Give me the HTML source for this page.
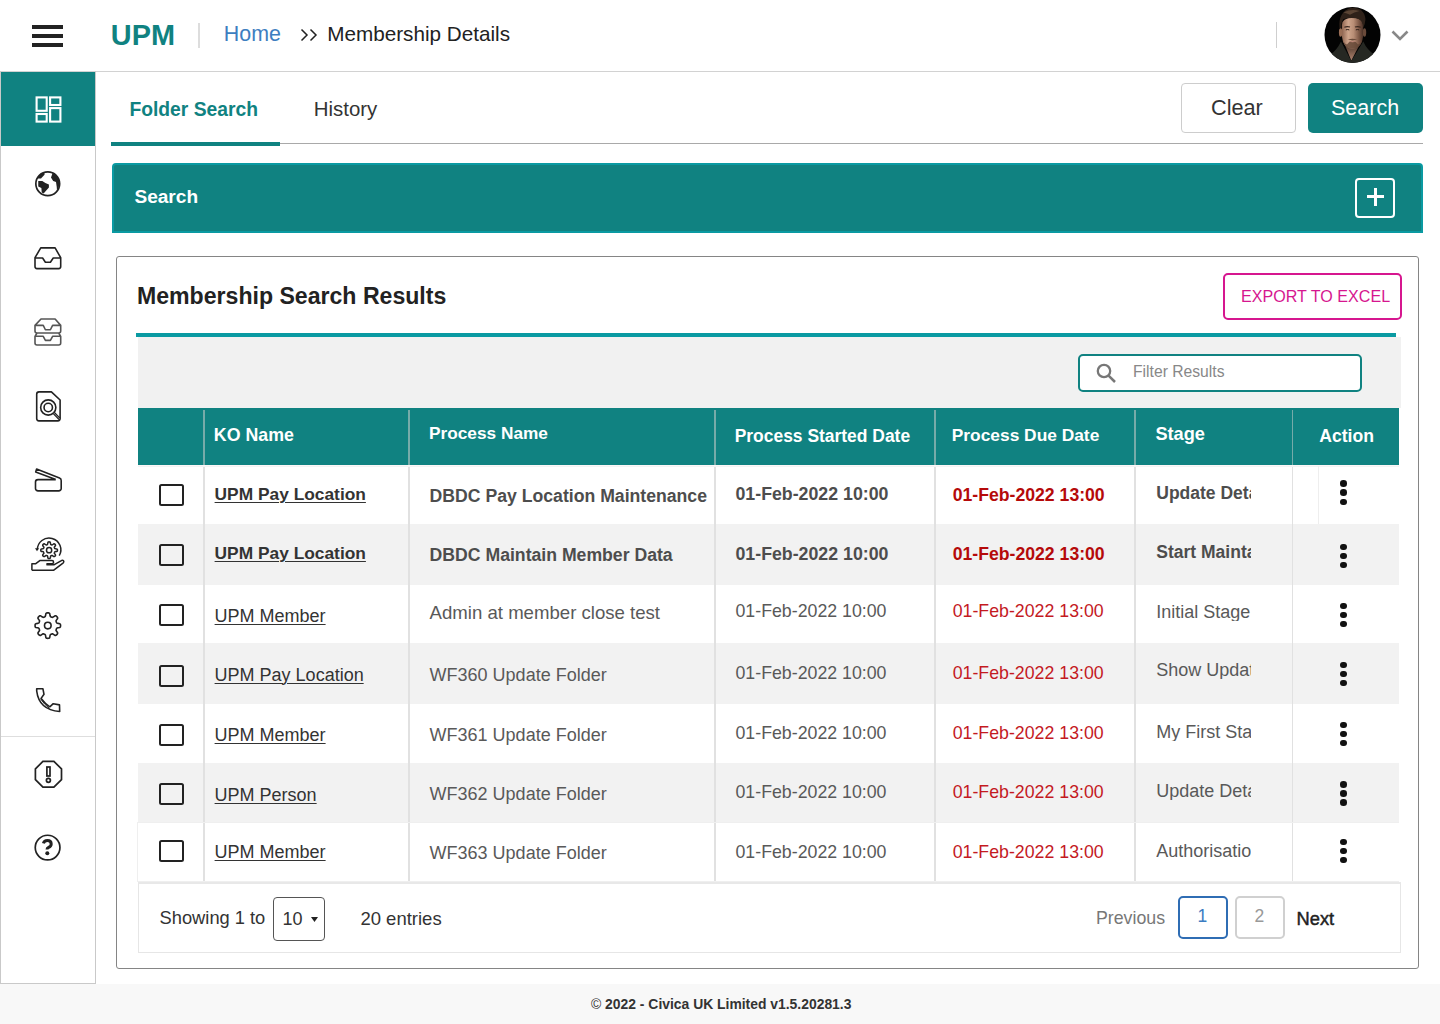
<!DOCTYPE html>
<html><head><meta charset="utf-8"><title>UPM - Membership Details</title>
<style>
*{margin:0;padding:0;box-sizing:border-box}
html,body{width:1440px;height:1024px;overflow:hidden;background:#fff;font-family:"Liberation Sans",sans-serif}
body{position:relative}
.a{position:absolute;white-space:nowrap;line-height:1}
.b{position:absolute}
svg{position:absolute;overflow:visible}
.u{text-decoration:underline;text-decoration-thickness:1px;text-underline-offset:2px}
.clip{overflow:hidden}
</style></head><body>
<div class="b" style="left:0;top:71px;width:1440px;height:1px;background:#d2d2d2"></div>
<div class="b" style="left:32px;top:25.2px;width:31px;height:3.6px;background:#222"></div>
<div class="b" style="left:32px;top:34.2px;width:31px;height:3.6px;background:#222"></div>
<div class="b" style="left:32px;top:43.2px;width:31px;height:3.6px;background:#222"></div>
<div class="a" style="left:110.8px;top:21.43px;font-size:28.9px;color:#108281;font-weight:700;">UPM</div>
<div class="b" style="left:198px;top:22.5px;width:1.5px;height:25.5px;background:#ddd"></div>
<div class="a" style="left:223.8px;top:23.68px;font-size:21.4px;color:#3d7ec0;">Home</div>
<svg style="left:300px;top:28px" width="18" height="14" viewBox="0 0 18 14"><path d="M1.5 1.5 L7 7 L1.5 12.5 M10.5 1.5 L16 7 L10.5 12.5" fill="none" stroke="#222" stroke-width="1.5"/></svg>
<div class="a" style="left:327.2px;top:23.87px;font-size:20.7px;color:#222;">Membership Details</div>
<div class="b" style="left:1276px;top:22px;width:1.2px;height:26px;background:#cfcfcf"></div>
<svg style="left:1320px;top:3px" width="66" height="64" viewBox="0 0 66 64">
<defs><clipPath id="av"><circle cx="32.5" cy="32" r="28"/></clipPath>
<linearGradient id="sk" x1="0" x2="1" y1="0" y2="0"><stop offset="0" stop-color="#8e6450"/><stop offset="0.3" stop-color="#cfa58c"/><stop offset="0.55" stop-color="#b88d75"/><stop offset="0.8" stop-color="#7e5846"/><stop offset="1" stop-color="#4a3228"/></linearGradient>
<linearGradient id="nk" x1="0" x2="0" y1="0" y2="1"><stop offset="0" stop-color="#4a3428"/><stop offset="1" stop-color="#b08470"/></linearGradient></defs>
<g clip-path="url(#av)">
<rect width="66" height="64" fill="#030303"/>
<path d="M2 64 L10 52 Q17 47 21 38.5 L31.3 58 L43.3 38.5 Q47 47 55 52 L64 64 Z" fill="#262823"/>
<path d="M24.5 41 L40 41 L31.3 57.5 Z" fill="url(#nk)"/>
<ellipse cx="20.6" cy="29.5" rx="1.7" ry="4.2" fill="#9a6e56"/>
<ellipse cx="44.5" cy="29.5" rx="1.7" ry="4.2" fill="#6a4a3a"/>
<path d="M21.9 22 Q22 15 32.5 14.5 Q43 15 43.1 22 L43 34 Q42 45 32.5 45.8 Q23 45 22 34 Z" fill="url(#sk)"/>
<path d="M22.3 33 Q23.5 45.5 32.5 45.8 Q41.5 45.5 42.7 33 Q41.8 41 38 41.5 Q35 37.8 32.5 37.6 Q30 37.8 27 41.5 Q23.2 41 22.3 33Z" fill="#5e4232" opacity="0.8"/>
<path d="M27.8 36.6 Q32.5 34.8 37.2 36.6 Q32.5 37.6 27.8 36.6Z" fill="#6a4a3a"/>
<path d="M28.5 38.4 Q32.5 37.4 36.5 38.4 Q32.5 40 28.5 38.4Z" fill="#c08a7a"/>
<path d="M24.3 24.2 Q27.3 23 30 24.1 M35 24.1 Q37.7 23 40.7 24.2" stroke="#3a2820" stroke-width="1.1" fill="none"/>
<path d="M25.8 26.9 Q27.5 26.1 29.3 26.9 M35.8 26.9 Q37.5 26.1 39.2 26.9" stroke="#2a1c16" stroke-width="1" fill="none"/>
<path d="M19.5 25 Q18 9 31 4.8 Q44 4 45.5 16 Q45 22 43.2 25 Q43 16 36 15.2 Q29 14.6 23.5 16 Q21 19 21.3 25Z" fill="#2e2119"/>
<path d="M23.5 9.5 Q31 5.5 39.5 8 Q34 9.2 30 11.8 Q27 10.2 23.5 9.5Z" fill="#5a4434"/>
</g></svg>
<svg style="left:1390px;top:29px" width="20" height="13" viewBox="0 0 20 13"><path d="M2.5 2.5 L10 10 L17.5 2.5" fill="none" stroke="#888" stroke-width="2.6"/></svg>
<div class="b" style="left:0;top:71px;width:96px;height:913px;border-left:1px solid #c9c9c9;border-right:1px solid #c9c9c9;border-bottom:1px solid #c9c9c9"></div>
<div class="b" style="left:1px;top:72px;width:94px;height:74px;background:#108281"></div>
<div class="b" style="left:1px;top:736px;width:94px;height:1px;background:#dedede"></div>
<svg style="left:0;top:0" width="96" height="140" viewBox="0 0 96 140">
<g fill="none" stroke="#fff" stroke-width="2.1">
<rect x="36.6" y="97.4" width="10.1" height="13.4"/>
<rect x="36.6" y="114" width="10.1" height="7.6"/>
<rect x="50.1" y="97.4" width="10.3" height="7.6"/>
<rect x="50.1" y="108.1" width="10.3" height="13.5"/>
</g></svg>
<svg style="left:32px;top:168px" width="32" height="32" viewBox="0 0 32 32">
<circle cx="15.75" cy="15.7" r="11.9" fill="none" stroke="#222" stroke-width="1.7"/>
<path d="M5.3 10.4 L9 10.4 L12.5 6.8 L12.5 4.2 Q7.5 5.6 5.3 10.4Z" fill="#222"/>
<path d="M20.8 4.6 L19 9.4 L21.2 13.1 L24 14 L24.7 18.8 L25 22.6 Q28 18 27.4 13 Q25.5 6.8 20.8 4.6Z" fill="#222"/>
<path d="M6.25 13.1 L10.3 13.1 L13.4 15 L16.9 16.6 L16.9 19.4 L11.6 25.6 L9.7 24.4 L9.4 20 L6.25 18.4Z" fill="#222"/>
</svg>
<svg style="left:32px;top:242px" width="32" height="32" viewBox="0 0 32 32">
<path d="M8.75 5.9 H23.1 L28.7 15.7 V24.6 a2 2 0 0 1 -2 2 H5 a2 2 0 0 1 -2 -2 V15.7 Z M3 16 H10.6 L13.4 20.3 H18.4 L21.25 16 H28.7" fill="none" stroke="#222" stroke-width="1.6" stroke-linejoin="round"/>
</svg>
<svg style="left:32px;top:316px" width="32" height="32" viewBox="0 0 32 32">
<g fill="none" stroke="#555" stroke-width="1.6" stroke-linejoin="round">
<path d="M9 3 H23.1 L28.7 9.4 V15 a2 2 0 0 1 -2 2 H5 a2 2 0 0 1 -2 -2 V9.4 Z M3 9.4 H11.25 L13.4 13.75 H18.4 L20.6 9.4 H28.7"/>
<path d="M5 17 L3 20.3 V27 a2 2 0 0 0 2 2 H26.7 a2 2 0 0 0 2 -2 V20.3 L26.7 17 M3 20.3 H11.25 L13.4 24.4 H18.4 L20.6 20.3 H28.7"/>
</g></svg>
<svg style="left:32px;top:390px" width="32" height="33" viewBox="0 0 32 33">
<g fill="none" stroke="#222" stroke-width="1.6" stroke-linejoin="round">
<path d="M19.4 1.9 H7 a2.3 2.3 0 0 0 -2.3 2.3 V28.6 a2.3 2.3 0 0 0 2.3 2.3 H25.8 a2.3 2.3 0 0 0 2.3 -2.3 V10 Z"/>
<circle cx="16.25" cy="17.5" r="7.6"/>
<circle cx="16.25" cy="17.5" r="4.2"/>
</g>
<path d="M21.6 22.8 L27.6 28.9" stroke="#222" stroke-width="2.8"/>
<path d="M21.6 22.8 L27.6 28.9" stroke="#bbb" stroke-width="0.7"/>
</svg>
<svg style="left:32px;top:464px" width="32" height="32" viewBox="0 0 32 32">
<path d="M23.75 15.6 H6 a2.5 2.5 0 0 0 -2.5 2.5 V24.4 a2.5 2.5 0 0 0 2.5 2.5 H26.7 a2.5 2.5 0 0 0 2.5 -2.5 V16.6 a2.6 2.6 0 0 0 -1.7 -2.6 L4.6 5.1 L3.7 8.0 L23.75 15.6" fill="none" stroke="#222" stroke-width="1.6" stroke-linejoin="round"/>
</svg>
<svg style="left:28px;top:534px" width="40" height="40" viewBox="0 0 40 40">
<g fill="none" stroke="#222" stroke-width="1.5" stroke-linejoin="round">
<path d="M21.1 7.8 L21.5 7.9 L22.0 8.0 L22.3 8.4 L22.5 9.6 L22.7 10.4 L22.9 10.6 L23.2 10.7 L23.5 10.9 L23.8 11.0 L24.1 11.0 L24.8 10.5 L25.8 9.8 L26.3 9.8 L26.7 10.0 L27.0 10.3 L27.3 10.6 L27.5 11.0 L27.5 11.5 L26.8 12.5 L26.3 13.2 L26.3 13.5 L26.4 13.8 L26.6 14.1 L26.7 14.4 L26.9 14.6 L27.7 14.8 L28.9 15.0 L29.3 15.3 L29.4 15.8 L29.5 16.2 L29.4 16.6 L29.3 17.1 L28.9 17.4 L27.7 17.6 L26.9 17.8 L26.7 18.0 L26.6 18.3 L26.4 18.6 L26.3 18.9 L26.3 19.2 L26.8 19.9 L27.5 20.9 L27.5 21.4 L27.3 21.8 L27.0 22.1 L26.7 22.4 L26.3 22.6 L25.8 22.6 L24.8 21.9 L24.1 21.4 L23.8 21.4 L23.5 21.5 L23.2 21.7 L22.9 21.8 L22.7 22.0 L22.5 22.8 L22.3 24.0 L22.0 24.4 L21.5 24.5 L21.1 24.5 L20.7 24.5 L20.2 24.4 L19.9 24.0 L19.7 22.8 L19.5 22.0 L19.3 21.8 L19.0 21.7 L18.7 21.5 L18.4 21.4 L18.1 21.4 L17.4 21.9 L16.4 22.6 L15.9 22.6 L15.5 22.4 L15.2 22.1 L14.9 21.8 L14.7 21.4 L14.7 20.9 L15.4 19.9 L15.9 19.2 L15.9 18.9 L15.8 18.6 L15.6 18.3 L15.5 18.0 L15.3 17.8 L14.5 17.6 L13.3 17.4 L12.9 17.1 L12.8 16.6 L12.8 16.2 L12.8 15.8 L12.9 15.3 L13.3 15.0 L14.5 14.8 L15.3 14.6 L15.5 14.4 L15.6 14.1 L15.8 13.8 L15.9 13.5 L15.9 13.2 L15.4 12.5 L14.7 11.5 L14.7 11.0 L14.9 10.6 L15.2 10.3 L15.5 10.0 L15.9 9.8 L16.4 9.8 L17.4 10.5 L18.1 11.0 L18.4 11.0 L18.7 10.9 L19.0 10.7 L19.3 10.6 L19.5 10.4 L19.7 9.6 L19.9 8.4 L20.2 8.0 L20.7 7.9Z"/>
<circle cx="21.1" cy="16.2" r="2.6"/>
<path d="M9.35 15.9 A11.75 11.75 0 1 1 31.25 21.7"/>
<path d="M3.9 36.2 V29.7 H7.8 L11.8 26.6 H24 a1.55 1.55 0 0 1 0 3.1 H18.4"/>
<path d="M18.4 30.7 H26.3 L33.4 26.6 a1.45 1.45 0 0 1 1.9 2.2 L25.8 36.2 H3.9"/>
</g>
<path d="M7 14.2 L11 14.2 L9 17.2Z" fill="#222"/>
</svg>
<svg style="left:32px;top:610px" width="32" height="32" viewBox="0 0 32 32">
<g fill="none" stroke="#222" stroke-width="1.6" stroke-linejoin="round">
<path d="M15.8 2.8 L16.5 2.9 L17.1 3.0 L17.7 3.6 L18.0 5.3 L18.3 6.4 L18.7 6.8 L19.1 7.0 L19.6 7.1 L20.0 7.3 L20.5 7.4 L21.5 6.8 L22.9 5.8 L23.8 5.8 L24.3 6.1 L24.8 6.6 L25.3 7.1 L25.6 7.6 L25.6 8.5 L24.6 9.9 L24.0 10.9 L24.1 11.4 L24.3 11.8 L24.4 12.3 L24.6 12.7 L25.0 13.1 L26.1 13.4 L27.8 13.7 L28.4 14.3 L28.5 14.9 L28.6 15.6 L28.5 16.3 L28.4 16.9 L27.8 17.5 L26.1 17.8 L25.0 18.1 L24.6 18.5 L24.4 18.9 L24.3 19.4 L24.1 19.8 L24.0 20.3 L24.6 21.3 L25.6 22.7 L25.6 23.6 L25.3 24.1 L24.8 24.6 L24.3 25.1 L23.8 25.4 L22.9 25.4 L21.5 24.4 L20.5 23.8 L20.0 23.9 L19.6 24.1 L19.1 24.2 L18.7 24.4 L18.3 24.8 L18.0 25.9 L17.7 27.6 L17.1 28.2 L16.5 28.3 L15.8 28.4 L15.1 28.3 L14.5 28.2 L13.9 27.6 L13.6 25.9 L13.3 24.8 L12.9 24.4 L12.5 24.2 L12.0 24.1 L11.6 23.9 L11.1 23.8 L10.1 24.4 L8.7 25.4 L7.8 25.4 L7.3 25.1 L6.8 24.6 L6.3 24.1 L6.0 23.6 L6.0 22.7 L7.0 21.3 L7.6 20.3 L7.5 19.8 L7.3 19.4 L7.2 18.9 L7.0 18.5 L6.6 18.1 L5.5 17.8 L3.8 17.5 L3.2 16.9 L3.1 16.3 L3.1 15.6 L3.1 14.9 L3.2 14.3 L3.8 13.7 L5.5 13.4 L6.6 13.1 L7.0 12.7 L7.2 12.3 L7.3 11.8 L7.5 11.4 L7.6 10.9 L7.0 9.9 L6.0 8.5 L6.0 7.6 L6.3 7.1 L6.8 6.6 L7.3 6.1 L7.8 5.8 L8.7 5.8 L10.1 6.8 L11.1 7.4 L11.6 7.3 L12.0 7.1 L12.5 7.0 L12.9 6.8 L13.3 6.4 L13.6 5.3 L13.9 3.6 L14.5 3.0 L15.1 2.9Z"/>
<circle cx="15.8" cy="15.6" r="3.3"/>
</g></svg>
<svg style="left:32px;top:684px" width="32" height="32" viewBox="0 0 32 32">
<g fill="none" stroke="#222" stroke-width="1.6" stroke-linejoin="round">
<path d="M4.7 4.7 H10.9 L12 10.3 L9.1 14.4 Q13 19.5 17.8 22.8 L21.25 19.7 L27.5 20.9 L27.7 27.5 Q7 26 4.7 7 Z"/>
<path d="M8.6 14.8 Q12.3 20.6 17.4 24.4" stroke-width="1"/>
</g></svg>
<svg style="left:32px;top:758px" width="32" height="32" viewBox="0 0 32 32">
<g fill="none" stroke="#222" stroke-width="1.7" stroke-linejoin="miter">
<path d="M10.9 3.4 H21.9 L29.5 10.9 V21.6 L21.9 29.2 H10.9 L3.4 21.6 V10.9 Z"/>
<rect x="14.9" y="9" width="3.1" height="9"/>
<circle cx="16.4" cy="22.3" r="2"/>
</g></svg>
<svg style="left:32px;top:832px" width="32" height="32" viewBox="0 0 32 32">
<circle cx="15.6" cy="15.6" r="12.35" fill="none" stroke="#222" stroke-width="1.7"/>
<path d="M11.4 11.4 Q12.2 8.6 15.4 8.6 Q19.2 8.6 19.2 11.9 Q19.2 14.2 16.6 15.4 Q15 16.1 15 17.4" fill="none" stroke="#222" stroke-width="3"/>
<circle cx="15.3" cy="21.3" r="2" fill="#222"/>
</svg>
<div class="a" style="left:129.4px;top:99.76px;font-size:19.3px;color:#108281;font-weight:700;">Folder Search</div>
<div class="a" style="left:313.8px;top:99.13px;font-size:20.4px;color:#333;">History</div>
<div class="b" style="left:279px;top:143px;width:1144px;height:1px;background:#a9a9a9"></div>
<div class="b" style="left:111px;top:142px;width:169px;height:4px;background:#108281"></div>
<div class="b" style="left:1181px;top:83px;width:115px;height:50px;border:1px solid #cdcdcd;border-radius:4px;background:#fff"></div>
<div class="a" style="left:1211.0px;top:97.03px;font-size:21.7px;color:#333;">Clear</div>
<div class="b" style="left:1308px;top:83px;width:115px;height:50px;border-radius:5px;background:#108281"></div>
<div class="a" style="left:1331.0px;top:97.70px;font-size:21.5px;color:#fff;">Search</div>
<div class="b" style="left:112px;top:163px;width:1311px;height:70px;background:#108281;border:2px solid #0a9aa2;border-radius:4px 4px 0 0"></div>
<div class="a" style="left:134.4px;top:186.73px;font-size:19.1px;color:#fff;font-weight:700;">Search</div>
<div class="b" style="left:1355px;top:178px;width:40px;height:40px;border:2px solid #fff;border-radius:4px"></div>
<div class="b" style="left:1366.6px;top:195.2px;width:17.1px;height:3.2px;background:#fff"></div>
<div class="b" style="left:1373.5px;top:188px;width:3.4px;height:18px;background:#fff"></div>
<div class="b" style="left:116px;top:256px;width:1303px;height:713px;border:1px solid #858585;border-radius:3px"></div>
<div class="a" style="left:137.0px;top:284.84px;font-size:23.1px;color:#222;font-weight:700;">Membership Search Results</div>
<div class="b" style="left:1223px;top:273px;width:179px;height:47px;border:2px solid #d6168f;border-radius:5px"></div>
<div class="a" style="left:1241.0px;top:287.67px;font-size:16.1px;color:#d6168f;">EXPORT TO EXCEL</div>
<div class="b" style="left:136px;top:333px;width:1260px;height:4px;background:#0a9aa2"></div>
<div class="b" style="left:138px;top:337px;width:1263px;height:71px;background:#f1f1f1"></div>
<div class="b" style="left:1078px;top:354px;width:284px;height:38px;border:2px solid #108281;border-radius:5px;background:#fff"></div>
<svg style="left:1094px;top:361px" width="24" height="24" viewBox="0 0 24 24"><circle cx="10" cy="10" r="6.2" fill="none" stroke="#777" stroke-width="2.3"/><path d="M14.6 14.6 L21 21" stroke="#777" stroke-width="2.5"/></svg>
<div class="a" style="left:1133.0px;top:363.91px;font-size:15.7px;color:#888;">Filter Results</div>
<div class="b" style="left:138px;top:408px;width:1261px;height:57px;background:#108281"></div>
<div class="a" style="left:213.8px;top:426.53px;font-size:17.8px;color:#fff;font-weight:700;">KO Name</div>
<div class="a" style="left:429.0px;top:424.79px;font-size:17.25px;color:#fff;font-weight:700;">Process Name</div>
<div class="a" style="left:734.7px;top:427.53px;font-size:17.45px;color:#fff;font-weight:700;">Process Started Date</div>
<div class="a" style="left:951.8px;top:427.31px;font-size:17.35px;color:#fff;font-weight:700;">Process Due Date</div>
<div class="a" style="left:1155.4px;top:424.69px;font-size:18.2px;color:#fff;font-weight:700;">Stage</div>
<div class="a" style="left:1319.2px;top:428.10px;font-size:17.6px;color:#fff;font-weight:700;">Action</div>
<div class="b" style="left:138px;top:465px;width:1261px;height:59px;background:#fff"></div>
<div class="b" style="left:159.3px;top:484.2px;width:24.5px;height:22px;border:2.7px solid #222;border-radius:2.5px"></div>
<div class="a" style="left:214.6px;top:486.21px;font-size:17.35px;color:#333;font-weight:700;"><span class="u">UPM Pay Location</span></div>
<div class="a" style="left:429.6px;top:488.36px;font-size:17.65px;color:#4d4d4d;font-weight:700;">DBDC Pay Location Maintenance</div>
<div class="a" style="left:735.5px;top:486.27px;font-size:17.75px;color:#4d4d4d;font-weight:700;">01-Feb-2022 10:00</div>
<div class="a" style="left:952.7px;top:486.56px;font-size:17.65px;color:#b50a0a;font-weight:700;">01-Feb-2022 13:00</div>
<div class="a" style="left:1156.3px;top:485.48px;font-size:17.5px;color:#4d4d4d;font-weight:700;width:95px;overflow:hidden">Update Details</div>
<div class="b" style="left:1340.2px;top:480.3px;width:6.6px;height:6.6px;border-radius:50%;background:#111"></div>
<div class="b" style="left:1340.2px;top:489.4px;width:6.6px;height:6.6px;border-radius:50%;background:#111"></div>
<div class="b" style="left:1340.2px;top:498.5px;width:6.6px;height:6.6px;border-radius:50%;background:#111"></div>
<div class="b" style="left:138px;top:524px;width:1261px;height:61px;background:#f2f2f2"></div>
<div class="b" style="left:159.3px;top:544.3px;width:24.5px;height:22px;border:2.7px solid #222;border-radius:2.5px"></div>
<div class="a" style="left:214.6px;top:545.41px;font-size:17.35px;color:#333;font-weight:700;"><span class="u">UPM Pay Location</span></div>
<div class="a" style="left:429.6px;top:546.56px;font-size:17.65px;color:#4d4d4d;font-weight:700;">DBDC Maintain Member Data</div>
<div class="a" style="left:735.5px;top:545.97px;font-size:17.75px;color:#4d4d4d;font-weight:700;">01-Feb-2022 10:00</div>
<div class="a" style="left:952.7px;top:546.26px;font-size:17.65px;color:#b50a0a;font-weight:700;">01-Feb-2022 13:00</div>
<div class="a" style="left:1156.3px;top:544.48px;font-size:17.5px;color:#4d4d4d;font-weight:700;width:95px;overflow:hidden">Start Maintain</div>
<div class="b" style="left:1340.2px;top:543.5px;width:6.6px;height:6.6px;border-radius:50%;background:#111"></div>
<div class="b" style="left:1340.2px;top:552.6px;width:6.6px;height:6.6px;border-radius:50%;background:#111"></div>
<div class="b" style="left:1340.2px;top:561.7px;width:6.6px;height:6.6px;border-radius:50%;background:#111"></div>
<div class="b" style="left:138px;top:585px;width:1261px;height:58px;background:#fff"></div>
<div class="b" style="left:159.3px;top:604.2px;width:24.5px;height:22px;border:2.7px solid #222;border-radius:2.5px"></div>
<div class="a" style="left:214.6px;top:606.56px;font-size:18.0px;color:#333;"><span class="u">UPM Member</span></div>
<div class="a" style="left:429.6px;top:604.15px;font-size:18.6px;color:#595959;">Admin at member close test</div>
<div class="a" style="left:735.5px;top:603.17px;font-size:17.75px;color:#595959;">01-Feb-2022 10:00</div>
<div class="a" style="left:952.7px;top:603.17px;font-size:17.75px;color:#c41a1f;">01-Feb-2022 13:00</div>
<div class="a" style="left:1156.3px;top:602.56px;font-size:18.0px;color:#595959;width:95px;overflow:hidden">Initial Stage</div>
<div class="b" style="left:1340.2px;top:602.6px;width:6.6px;height:6.6px;border-radius:50%;background:#111"></div>
<div class="b" style="left:1340.2px;top:611.7px;width:6.6px;height:6.6px;border-radius:50%;background:#111"></div>
<div class="b" style="left:1340.2px;top:620.8px;width:6.6px;height:6.6px;border-radius:50%;background:#111"></div>
<div class="b" style="left:138px;top:643px;width:1261px;height:61px;background:#f2f2f2"></div>
<div class="b" style="left:159.3px;top:664.5px;width:24.5px;height:22px;border:2.7px solid #222;border-radius:2.5px"></div>
<div class="a" style="left:214.6px;top:665.66px;font-size:18.0px;color:#333;"><span class="u">UPM Pay Location</span></div>
<div class="a" style="left:429.6px;top:665.56px;font-size:18.0px;color:#595959;">WF360 Update Folder</div>
<div class="a" style="left:735.5px;top:664.97px;font-size:17.75px;color:#595959;">01-Feb-2022 10:00</div>
<div class="a" style="left:952.7px;top:664.97px;font-size:17.75px;color:#c41a1f;">01-Feb-2022 13:00</div>
<div class="a" style="left:1156.3px;top:661.26px;font-size:18.0px;color:#595959;width:95px;overflow:hidden">Show Update</div>
<div class="b" style="left:1340.2px;top:661.6px;width:6.6px;height:6.6px;border-radius:50%;background:#111"></div>
<div class="b" style="left:1340.2px;top:670.7px;width:6.6px;height:6.6px;border-radius:50%;background:#111"></div>
<div class="b" style="left:1340.2px;top:679.8px;width:6.6px;height:6.6px;border-radius:50%;background:#111"></div>
<div class="b" style="left:138px;top:704px;width:1261px;height:59px;background:#fff"></div>
<div class="b" style="left:159.3px;top:723.8px;width:24.5px;height:22px;border:2.7px solid #222;border-radius:2.5px"></div>
<div class="a" style="left:214.6px;top:726.16px;font-size:18.0px;color:#333;"><span class="u">UPM Member</span></div>
<div class="a" style="left:429.6px;top:725.76px;font-size:18.0px;color:#595959;">WF361 Update Folder</div>
<div class="a" style="left:735.5px;top:724.87px;font-size:17.75px;color:#595959;">01-Feb-2022 10:00</div>
<div class="a" style="left:952.7px;top:724.87px;font-size:17.75px;color:#c41a1f;">01-Feb-2022 13:00</div>
<div class="a" style="left:1156.3px;top:722.76px;font-size:18.0px;color:#595959;width:95px;overflow:hidden">My First Stage</div>
<div class="b" style="left:1340.2px;top:721.6px;width:6.6px;height:6.6px;border-radius:50%;background:#111"></div>
<div class="b" style="left:1340.2px;top:730.7px;width:6.6px;height:6.6px;border-radius:50%;background:#111"></div>
<div class="b" style="left:1340.2px;top:739.8px;width:6.6px;height:6.6px;border-radius:50%;background:#111"></div>
<div class="b" style="left:138px;top:763px;width:1261px;height:59px;background:#f2f2f2"></div>
<div class="b" style="left:159.3px;top:782.8px;width:24.5px;height:22px;border:2.7px solid #222;border-radius:2.5px"></div>
<div class="a" style="left:214.6px;top:785.56px;font-size:18.0px;color:#333;"><span class="u">UPM Person</span></div>
<div class="a" style="left:429.6px;top:784.56px;font-size:18.0px;color:#595959;">WF362 Update Folder</div>
<div class="a" style="left:735.5px;top:783.97px;font-size:17.75px;color:#595959;">01-Feb-2022 10:00</div>
<div class="a" style="left:952.7px;top:783.97px;font-size:17.75px;color:#c41a1f;">01-Feb-2022 13:00</div>
<div class="a" style="left:1156.3px;top:782.06px;font-size:18.0px;color:#595959;width:95px;overflow:hidden">Update Details</div>
<div class="b" style="left:1340.2px;top:781.1px;width:6.6px;height:6.6px;border-radius:50%;background:#111"></div>
<div class="b" style="left:1340.2px;top:790.2px;width:6.6px;height:6.6px;border-radius:50%;background:#111"></div>
<div class="b" style="left:1340.2px;top:799.3px;width:6.6px;height:6.6px;border-radius:50%;background:#111"></div>
<div class="b" style="left:138px;top:822px;width:1261px;height:60px;background:#fff"></div>
<div class="b" style="left:159.3px;top:840.3px;width:24.5px;height:22px;border:2.7px solid #222;border-radius:2.5px"></div>
<div class="a" style="left:214.6px;top:843.46px;font-size:18.0px;color:#333;"><span class="u">UPM Member</span></div>
<div class="a" style="left:429.6px;top:843.96px;font-size:18.0px;color:#595959;">WF363 Update Folder</div>
<div class="a" style="left:735.5px;top:843.87px;font-size:17.75px;color:#595959;">01-Feb-2022 10:00</div>
<div class="a" style="left:952.7px;top:843.87px;font-size:17.75px;color:#c41a1f;">01-Feb-2022 13:00</div>
<div class="a" style="left:1156.3px;top:841.76px;font-size:18.0px;color:#595959;width:95px;overflow:hidden">Authorisation</div>
<div class="b" style="left:1340.2px;top:838.6px;width:6.6px;height:6.6px;border-radius:50%;background:#111"></div>
<div class="b" style="left:1340.2px;top:847.7px;width:6.6px;height:6.6px;border-radius:50%;background:#111"></div>
<div class="b" style="left:1340.2px;top:856.8px;width:6.6px;height:6.6px;border-radius:50%;background:#111"></div>
<div class="b" style="left:203px;top:410px;width:2px;height:55px;background:#76aba9"></div>
<div class="b" style="left:203px;top:465px;width:2px;height:417px;background:#e1e1e1"></div>
<div class="b" style="left:408px;top:410px;width:2px;height:55px;background:#76aba9"></div>
<div class="b" style="left:408px;top:465px;width:2px;height:417px;background:#e1e1e1"></div>
<div class="b" style="left:714px;top:410px;width:2px;height:55px;background:#76aba9"></div>
<div class="b" style="left:714px;top:465px;width:2px;height:417px;background:#e1e1e1"></div>
<div class="b" style="left:934px;top:410px;width:2px;height:55px;background:#76aba9"></div>
<div class="b" style="left:934px;top:465px;width:2px;height:417px;background:#e1e1e1"></div>
<div class="b" style="left:1134px;top:410px;width:2px;height:55px;background:#76aba9"></div>
<div class="b" style="left:1134px;top:465px;width:2px;height:417px;background:#e1e1e1"></div>
<div class="b" style="left:1292px;top:410px;width:1.3px;height:55px;background:#76aba9"></div>
<div class="b" style="left:1292px;top:465px;width:1.3px;height:417px;background:#e1e1e1"></div>
<div class="b" style="left:138px;top:465px;width:1261px;height:1px;background:#fbf7f7"></div>
<div class="b" style="left:138px;top:466px;width:1261px;height:1px;background:#f3f3f3"></div>
<div class="b" style="left:137px;top:822px;width:1262px;height:60px;border:1px solid #efefef;border-right:none"></div>
<div class="b" style="left:1318px;top:466px;width:1px;height:58px;background:#eeeeee"></div>
<div class="b" style="left:138px;top:882px;width:1263px;height:71px;border:1px solid #e6e6e6;border-top:2px solid #e8e8e8"></div>
<div class="a" style="left:159.6px;top:908.91px;font-size:18.3px;color:#333;">Showing 1 to</div>
<div class="b" style="left:273px;top:897px;width:52px;height:44px;border:1px solid #555;border-radius:4px"></div>
<div class="a" style="left:282.6px;top:910.46px;font-size:18.0px;color:#333;">10</div>
<svg style="left:310px;top:916px" width="9" height="7" viewBox="0 0 9 7"><path d="M1 1 H8 L4.5 6Z" fill="#222"/></svg>
<div class="a" style="left:360.4px;top:910.04px;font-size:18.5px;color:#333;">20 entries</div>
<div class="a" style="left:1096.0px;top:909.67px;font-size:17.75px;color:#777;">Previous</div>
<div class="b" style="left:1178px;top:896px;width:50px;height:43px;border:2px solid #2f6db4;border-radius:5px"></div>
<div class="a" style="left:1197.5px;top:908.48px;font-size:17.5px;color:#3b7cc2;">1</div>
<div class="b" style="left:1235px;top:896px;width:50px;height:43px;border:2px solid #d0d0d0;border-radius:5px"></div>
<div class="a" style="left:1254.5px;top:908.48px;font-size:17.5px;color:#999;">2</div>
<div class="a" style="left:1296.6px;top:909.51px;font-size:18.3px;color:#222;-webkit-text-stroke:0.45px #222">Next</div>
<div class="b" style="left:0;top:984px;width:1440px;height:40px;background:#f8f8f8"></div>
<div class="a" style="left:591.0px;top:998.33px;font-size:13.9px;color:#333;font-weight:700;"><span style="font-weight:400">&copy;</span> 2022 - Civica UK Limited v1.5.20281.3</div>
</body></html>
